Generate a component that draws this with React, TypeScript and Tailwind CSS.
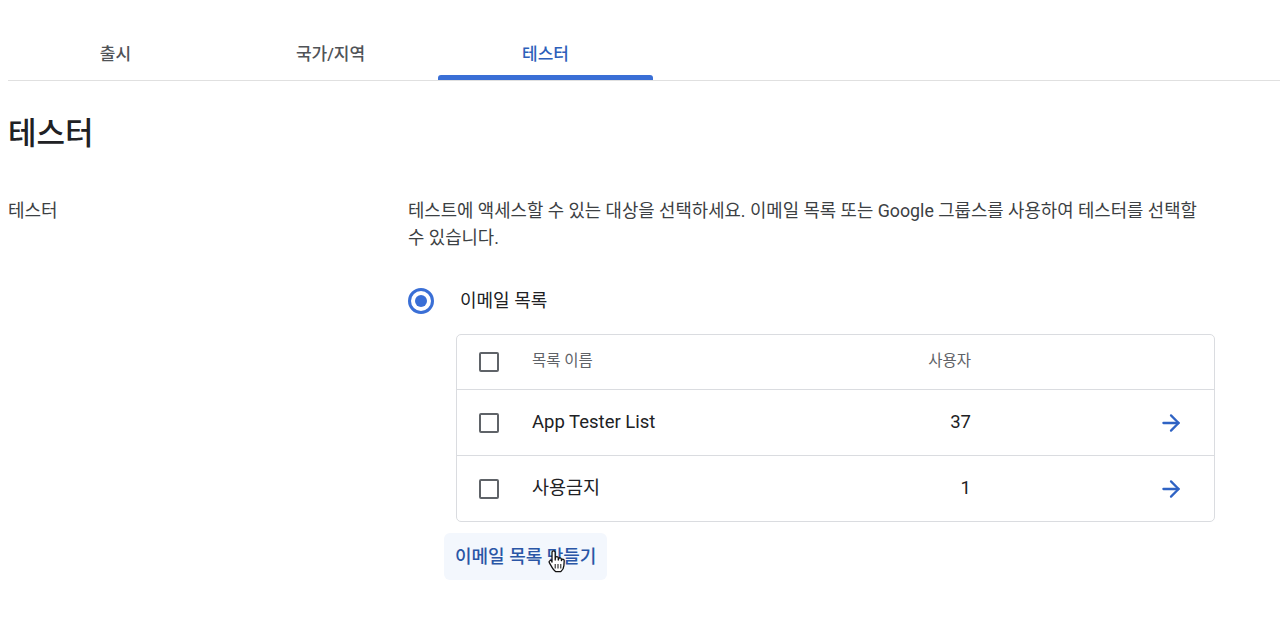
import { ArrowRight } from "lucide-react";

const font = { fontFamily: "Roboto, 'Noto Sans CJK KR', sans-serif" };

function Tab({ label, active }: { label: string; active?: boolean }) {
  return (
    <div className="relative flex h-[50px] w-[215px] items-center justify-center">
      <span className={active ? "text-[17px] font-medium text-[#2d5fba]" : "text-[17px] font-medium text-[#505357]"}>
        {label}
      </span>
      {active ? <div className="absolute bottom-0 left-0 right-0 h-[5px] rounded-t-[3px] bg-[#3a6fd6]" /> : null}
    </div>
  );
}

function Checkbox() {
  return <div className="h-[20px] w-[20px] rounded-[2px] border-2 border-[#5f6368]" />;
}

function Row({ name, count, last }: { name: string; count: number; last?: boolean }) {
  return (
    <div className={last ? "flex h-[65px] items-center" : "flex h-[66px] items-center border-b border-[#dadce0]"}>
      <div className="w-[75px] pl-[22px]">
        <Checkbox />
      </div>
      <div className="flex-1 text-[18.5px] text-[#202124]">{name}</div>
      <div className="w-[60px] text-right text-[18.5px] text-[#202124]">{count}</div>
      <div className="flex w-[243px] justify-end pr-[30px]">
        <ArrowRight size={26} strokeWidth={2.1} className="text-[#2f63c4]" />
      </div>
    </div>
  );
}

function HandCursor() {
  return (
    <svg width="20" height="24" viewBox="0 0 20 24" className="absolute left-[103px] top-[17px]">
      <path
        d="M5 2.5c0-1 .7-1.7 1.6-1.7s1.6.7 1.6 1.7V10l.2-2.2c.2-.8.9-1.2 1.6-1.1.8.1 1.3.8 1.3 1.6V10l.3-1.2c.2-.7.9-1.1 1.6-1 .7.1 1.2.7 1.2 1.5v1.3l.3-.6c.3-.6 1-.9 1.6-.7.6.2 1 .8.9 1.5l-.3 4.8c-.2 2.8-1.4 4.7-3 6H8.5c-1.3-1-2.3-2.3-3.3-4L2.3 12.7c-.4-.8-.2-1.6.5-2 .7-.4 1.6-.2 2 .5L5 12V2.5z"
        fill="#fff"
        stroke="#111"
        strokeWidth="1.3"
        strokeLinejoin="round"
      />
      <path d="M8.2 14v4.5M11 14v4.5M13.8 14v4.5" stroke="#111" strokeWidth="1" />
    </svg>
  );
}

export default function App() {
  return (
    <div className="h-[618px] w-[1280px] overflow-hidden bg-white" style={font}>
      <div className="pt-[30px]">
        <div className="ml-[8px] flex border-b border-[#e0e0e0]">
          <Tab label="출시" />
          <Tab label="국가/지역" />
          <Tab label="테스터" active />
        </div>
      </div>

      <h1 className="ml-[8px] mt-[34px] text-[31px] font-medium leading-[38px] text-[#202124]">테스터</h1>

      <div className="mt-[44px] flex">
        <div className="w-[408px] pl-[8px] text-[18px] leading-[27px] text-[#3c4043]">테스터</div>
        <div className="w-[820px]">
          <p className="w-[800px] break-keep text-[17.8px] leading-[27px] text-[#3c4043]">
            테스트에 액세스할 수 있는 대상을 선택하세요. 이메일 목록 또는 Google 그룹스를 사용하여 테스터를 선택할 수 있습니다.
          </p>

          <div className="mt-[36px] flex items-center">
            <div className="flex h-[26px] w-[26px] items-center justify-center rounded-full border-[3px] border-[#3a6fd6]">
              <div className="h-[12px] w-[12px] rounded-full bg-[#3a6fd6]" />
            </div>
            <span className="ml-[26px] text-[18px] text-[#202124]">이메일 목록</span>
          </div>

          <div className="ml-[48px] mt-[20px] w-[759px] rounded-[5px] border border-[#dadce0]">
            <div className="flex h-[55px] items-center border-b border-[#dadce0]">
              <div className="w-[75px] pl-[22px]">
                <Checkbox />
              </div>
              <div className="flex-1 text-[15.5px] text-[#5f6368]">목록 이름</div>
              <div className="w-[60px] text-right text-[15.5px] text-[#5f6368]">사용자</div>
              <div className="w-[243px]" />
            </div>
            <Row name="App Tester List" count={37} />
            <Row name="사용금지" count={1} last />
          </div>

          <div className="relative ml-[36px] mt-[11px] inline-flex h-[47px] items-center rounded-[6px] bg-[#f3f7fd] px-[11px] text-[18px] font-medium text-[#2a56a6]">
            이메일 목록 만들기
            <HandCursor />
          </div>
        </div>
      </div>
    </div>
  );
}
